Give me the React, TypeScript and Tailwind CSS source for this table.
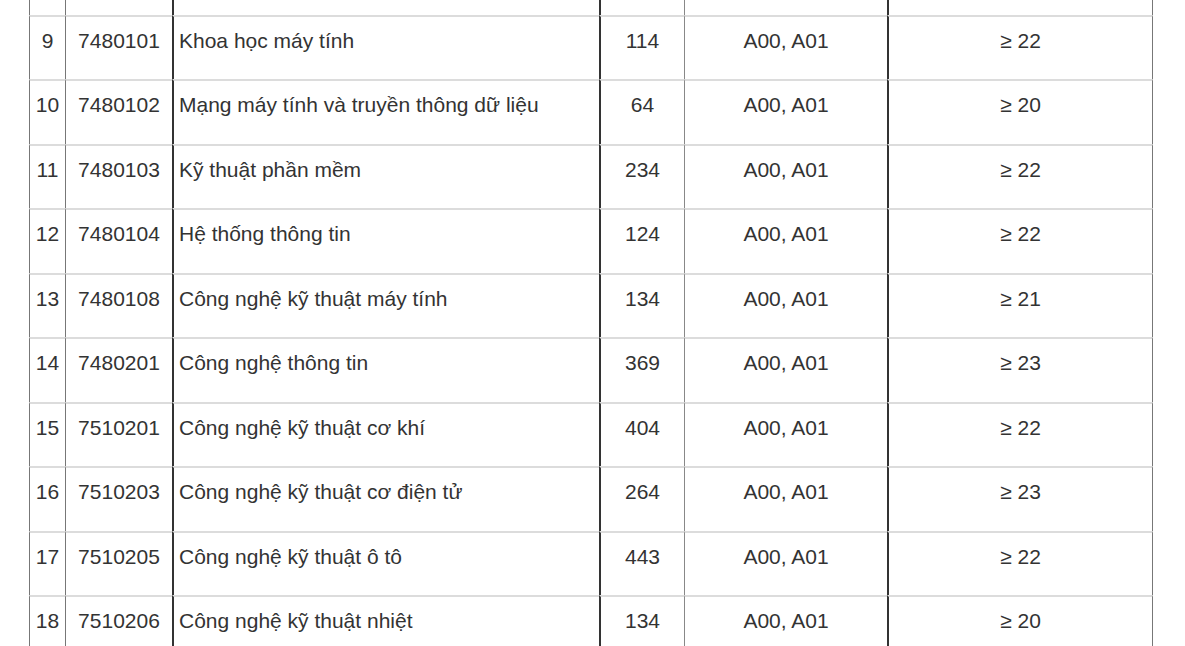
import React from 'react'

type Row = {
  stt: string
  code: string
  name: string
  quota: string
  groups: string
  score: string
}

const rows: Row[] = [
  { stt: '9', code: '7480101', name: 'Khoa học máy tính', quota: '114', groups: 'A00, A01', score: '≥ 22' },
  { stt: '10', code: '7480102', name: 'Mạng máy tính và truyền thông dữ liệu', quota: '64', groups: 'A00, A01', score: '≥ 20' },
  { stt: '11', code: '7480103', name: 'Kỹ thuật phần mềm', quota: '234', groups: 'A00, A01', score: '≥ 22' },
  { stt: '12', code: '7480104', name: 'Hệ thống thông tin', quota: '124', groups: 'A00, A01', score: '≥ 22' },
  { stt: '13', code: '7480108', name: 'Công nghệ kỹ thuật máy tính', quota: '134', groups: 'A00, A01', score: '≥ 21' },
  { stt: '14', code: '7480201', name: 'Công nghệ thông tin', quota: '369', groups: 'A00, A01', score: '≥ 23' },
  { stt: '15', code: '7510201', name: 'Công nghệ kỹ thuật cơ khí', quota: '404', groups: 'A00, A01', score: '≥ 22' },
  { stt: '16', code: '7510203', name: 'Công nghệ kỹ thuật cơ điện tử', quota: '264', groups: 'A00, A01', score: '≥ 23' },
  { stt: '17', code: '7510205', name: 'Công nghệ kỹ thuật ô tô', quota: '443', groups: 'A00, A01', score: '≥ 22' },
  { stt: '18', code: '7510206', name: 'Công nghệ kỹ thuật nhiệt', quota: '134', groups: 'A00, A01', score: '≥ 20' },
]

// column widths include the left border of each cell
const cols = [
  'w-[36px] border-l border-[#777] justify-center',
  'w-[107px] border-l border-[#777] justify-center',
  'w-[427px] border-l-2 border-[#333] justify-start pl-[5px]',
  'w-[85px] border-l-2 border-[#333] justify-center',
  'w-[203px] border-l border-[#888] justify-center',
  'w-[266px] border-l-2 border-[#333] border-r border-r-[#777] justify-center',
]

function TableRow({ cells, first }: { cells: string[]; first?: boolean }) {
  return (
    <div className={first ? 'flex h-[15px]' : 'flex h-[64.45px]'}>
      {cells.map((c, i) => (
        <div
          key={i}
          className={`flex shrink-0 items-start whitespace-nowrap ${cols[i]} ${first ? '' : 'border-t-2 border-t-[#dcdcdc] pt-[9px]'}`}
        >
          {c}
        </div>
      ))}
    </div>
  )
}

export default function App() {
  return (
    <div
      className="h-[646px] w-[1185px] overflow-hidden bg-white pl-[29px] text-[21px] leading-[30px] text-[#333]"
      style={{ fontFamily: '"Liberation Sans", Arial, sans-serif' }}
    >
      <TableRow first cells={['', '', '', '', '', '']} />
      {rows.map((r) => (
        <TableRow key={r.stt} cells={[r.stt, r.code, r.name, r.quota, r.groups, r.score]} />
      ))}
    </div>
  )
}
